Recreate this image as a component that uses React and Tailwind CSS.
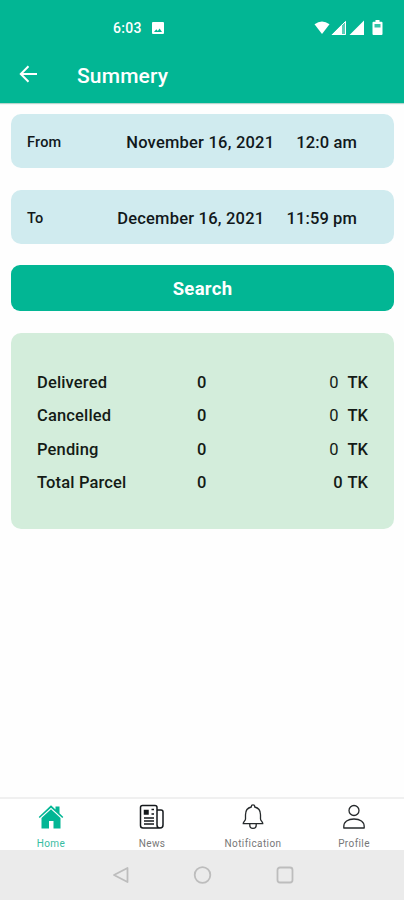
const rows = [
  { label: 'Delivered', count: '0', amount: '0', gap: 'gap-[9px]', weight: 'font-normal' },
  { label: 'Cancelled', count: '0', amount: '0', gap: 'gap-[9px]', weight: 'font-normal' },
  { label: 'Pending', count: '0', amount: '0', gap: 'gap-[9px]', weight: 'font-normal' },
  { label: 'Total Parcel', count: '0', amount: '0', gap: 'gap-[5px]', weight: 'font-medium' },
];

function StatusBar() {
  return (
    <div className="flex h-[54px] items-center pl-[113px] pr-[20px] text-white">
      <span className="w-[39px] pt-px text-[14px] font-medium leading-5 tracking-[0.3px]">6:03</span>
      <svg className="mt-px h-[12px] w-[12px]" viewBox="0 0 12 12" fill="currentColor">
        <path fillRule="evenodd" d="M1 0h10a1 1 0 0 1 1 1v10a1 1 0 0 1-1 1H1a1 1 0 0 1-1-1V1a1 1 0 0 1 1-1Zm1 10h8L7.6 6.6 5.8 9 4.3 7.3Z" />
      </svg>
      <svg className="ml-auto mt-px h-[16px] w-[70px]" viewBox="0 0 70 16" fill="currentColor">
        <path d="M0.500 4.200Q8 -1.400 15.500 4.200L8 14Z" />
        <path d="M32 0.500V15H17.500Z" fillOpacity="0.35" />
        <path d="M31.500 1.500V14.500H18.500Z" fill="none" stroke="currentColor" />
        <path d="M28 4.500V15H17.500Z" />
        <path d="M50 0.500V15H35.500Z" />
        <path d="M59.500 1.700H61.500V0h4v1.700h2q1 0 1 1V14q0 1-1 1h-8q-1 0-1-1V2.700q0-1 1-1Z" />
        <path d="M60.500 4h6v3.500h-6Z" fill="#02b694" fillOpacity="0.8" />
      </svg>
    </div>
  );
}

function DateRow({ label, date, time }) {
  return (
    <div className="flex h-[54px] items-center rounded-[10px] bg-[#d0ebef] pl-[16px] pr-[37px] pt-[4px] text-[16.5px] font-medium text-[#11181b]">
      <span className="text-[14.5px] tracking-[0.2px]">{label}</span>
      <span className="ml-auto tracking-[0.22px]">{date}</span>
      <span className="ml-[22px] tracking-[0.12px]">{time}</span>
    </div>
  );
}

function HomeIcon() {
  return (
    <svg className="h-[26px] w-[26px]" viewBox="0 0 26 26" fill="#02b694">
      <path d="M13 1.200 17.500 5.500V2.500h4v6.800L25.300 13l-1 1L13 3.700 1.700 14l-1-1Z" />
      <path d="M13 5.300 22.500 14v10.500h-7V17h-4.500v7.500H3.500V14Z" />
    </svg>
  );
}

function NewsIcon() {
  return (
    <svg className="h-[26px] w-[26px]" viewBox="0 0 26 26" fill="none" stroke="#15191c" strokeWidth="1.500">
      <path d="M20.500 24H4q-2.500 0-2.500-2.500V3.500Q1.500 1.500 3.500 1.500h12.500q2 0 2 2V21q0 3 3 3t3-3V8q0-2-2-2h-4" />
      <path d="M5.500 6.500h3.500v3.500H5.500Z" fill="#15191c" />
      <path d="M12.500 5.500H15M12.500 10H15M5 14h10M5 17h10M5 20h10" strokeWidth="1.300" />
    </svg>
  );
}

function BellIcon() {
  return (
    <svg className="h-[26px] w-[26px]" viewBox="0 0 26 26" fill="none" stroke="#25292b" strokeWidth="1.300" strokeLinejoin="round">
      <path d="M11.300 3V2.500a1.700 1.700 0 0 1 3.400 0V3c4.400 1 5.800 4 5.800 7.700v4.300c0 1.700 2.300 2.700 2.300 4.700H3.200c0-2 2.300-3 2.300-4.700V10.700c0-3.700 1.400-6.700 5.800-7.700Z" />
      <path d="M9.800 20v1.200c0 4.200 6.400 4.200 6.400 0V20" />
    </svg>
  );
}

function ProfileIcon() {
  return (
    <svg className="h-[26px] w-[26px]" viewBox="0 0 26 26" fill="none" stroke="#25292b" strokeWidth="1.300" strokeLinejoin="round">
      <circle cx="13" cy="6.500" r="5" />
      <path d="M2.800 24v-1.500c0-4.500 4-7.500 10.200-7.500s10.200 3 10.200 7.500V24Z" />
    </svg>
  );
}

const tabs = [
  { label: 'Home', Icon: HomeIcon, color: 'text-[#36bca1]' },
  { label: 'News', Icon: NewsIcon, color: 'text-[#777]' },
  { label: 'Notification', Icon: BellIcon, color: 'text-[#777]' },
  { label: 'Profile', Icon: ProfileIcon, color: 'text-[#777]' },
];

export default function App() {
  return (
    <div className="flex h-[900px] w-[404px] flex-col overflow-hidden bg-[#fefefe] font-['Roboto',sans-serif]">
      <header className="h-[103px] shrink-0 bg-[#02b694] text-white shadow-[0_1px_1px_#b7d5cd]">
        <StatusBar />
        <div className="flex h-[42px] items-center pl-[19px]">
          <svg className="-mt-[2px] h-[18px] w-[18px]" viewBox="0 0 18 18" fill="none" stroke="currentColor" strokeWidth="2">
            <path d="M18 9H2M9.500 1.300 1.800 9l7.700 7.700" />
          </svg>
          <h1 className="ml-10 pt-px text-[21px] font-medium leading-7 tracking-[0.15px]">Summery</h1>
        </div>
      </header>

      <main className="flex flex-1 flex-col pl-[11px] pr-[10px] pt-[11px]">
        <DateRow label="From" date="November 16, 2021" time="12:0 am" />
        <div className="h-[22px]" />
        <DateRow label="To" date="December 16, 2021" time="11:59 pm" />
        <button className="mt-[21px] h-[46px] rounded-[9px] bg-[#02b694] pt-[4px] text-[18.5px] font-bold tracking-[0.3px] text-white">
          Search
        </button>
        <section className="mt-[22px] h-[196px] rounded-[10px] bg-[#d3eddb] px-[26px] pt-[33.5px] text-[16.5px] font-medium text-[#141b16]">
          {rows.map((row) => (
            <div key={row.label} className="grid h-[33.5px] grid-cols-[160px_1fr_auto] items-center">
              <span className="tracking-[0.15px]">{row.label}</span>
              <span>{row.count}</span>
              <span className={`flex ${row.gap}`}>
                <span className={row.weight}>{row.amount}</span>
                <span>TK</span>
              </span>
            </div>
          ))}
        </section>
      </main>

      <nav className="grid h-[53px] shrink-0 grid-cols-4 border-t-2 border-[#f0f0f0] bg-white">
        {tabs.map(({ label, Icon, color }) => (
          <div key={label} className="flex flex-col items-center pl-px pt-[5px]">
            <Icon />
            <span className={`mt-[8px] text-[10px] leading-[12px] tracking-[0.4px] ${color}`}>{label}</span>
          </div>
        ))}
      </nav>
      <footer className="flex h-[50px] shrink-0 items-center justify-center bg-[#ebebeb]">
        <svg className="h-[18px] w-[184px]" viewBox="0 0 184 18" fill="none" stroke="#bdbdbd" strokeWidth="1.800" strokeLinejoin="round">
          <path d="M17.500 2v14L4 9Z" />
          <circle cx="92.500" cy="9" r="7.800" />
          <rect x="167.500" y="1.500" width="15" height="15" rx="2.500" />
        </svg>
      </footer>
    </div>
  );
}
